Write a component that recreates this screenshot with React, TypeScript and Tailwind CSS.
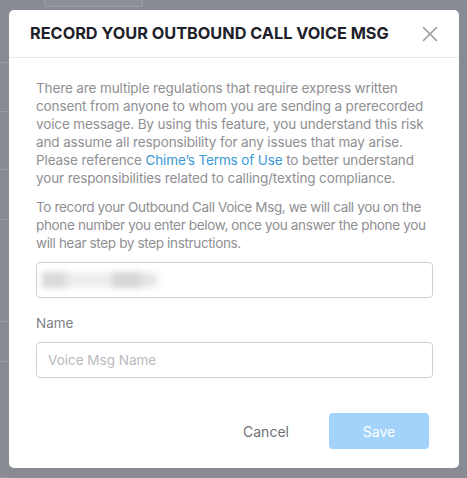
import React from "react";

export default function App() {
  const font = { fontFamily: "Inter, 'Noto Sans', sans-serif" };
  const rows = [56, 49, 58, 50, 102, 40, 116];
  return (
    <div
      className="relative w-[467px] h-[478px] overflow-hidden bg-[#898b94]"
      style={font}
    >
      {/* dimmed page behind the dialog */}
      <div className="flex flex-col">
        <div className="h-[7px] pl-[44px]">
          <div className="w-[99px] h-[7px] rounded-b-[3px] border border-t-0 border-[#9ea0a8] bg-[#8d8f98]" />
        </div>
        <div className="flex flex-col w-[9px]">
          {rows.map((h, i) => (
            <div
              key={i}
              className="border-b border-[#9a9ca4]"
              style={{ height: h }}
            />
          ))}
        </div>
      </div>

      {/* dialog overlay */}
      <div className="absolute inset-0 pt-[10px] pl-[9px]">
        <div className="w-[450px] h-[458px] bg-white rounded-[5px] flex flex-col">
          {/* header */}
          <div className="h-[48px] border-b border-[#e9e9ec] flex items-center justify-between pl-[21px] pr-[20px]">
            <h2 className="text-[16.3px] font-bold text-[#1e2129]">
              RECORD YOUR OUTBOUND CALL VOICE MSG
            </h2>
            <svg width="16" height="16" viewBox="0 0 16 16" className="mr-[1px]">
              <path
                d="M1.5 1.5 L14.5 14.5 M14.5 1.5 L1.5 14.5"
                stroke="#9b9ca2"
                strokeWidth="1.6"
                strokeLinecap="round"
              />
            </svg>
          </div>

          {/* body */}
          <div className="pt-[21px] pl-[27px] pr-[26px] text-[13.5px] leading-[18px] text-[#8f8f93]">
            <p className="pr-[-4px] mr-[-6px] tracking-[-0.12px]">
              There are multiple regulations that require express written
              consent from anyone to whom you are sending a prerecorded voice
              message. By using this feature, you understand this risk and
              assume all responsibility for any issues that may arise. Please
              reference <span className="text-[#3a98d6]">Chime’s Terms of Use</span>{" "}
              to better understand your responsibilities related to
              calling/texting compliance.
            </p>
            <p className="mt-[11px] mr-[-6px] tracking-[-0.35px]">
              To record your Outbound Call Voice Msg, we will call you on the
              phone number you enter below, once you answer the phone you will
              hear step by step instructions.
            </p>

            <div className="mt-[10px] h-[36px] rounded-[4px] border border-[#cfcfd3] flex items-center pl-[5px] overflow-hidden">
              <div className="flex items-center h-[18px] w-[116px] blur-[3px]">
                <div className="w-[24px] h-[16px] bg-[#d9d9dc]" />
                <div className="w-[46px] h-[14px] bg-[#ececee]" />
                <div className="w-[30px] h-[16px] bg-[#d6d6d9]" />
                <div className="w-[16px] h-[14px] bg-[#e6e6e8]" />
              </div>
            </div>

            <div className="mt-[16px] text-[#7e7f84]">Name</div>
            <div className="mt-[10px] h-[36px] rounded-[4px] border border-[#cfcfd3] flex items-center pl-[11px] text-[#b9bac0]">
              Voice Msg Name
            </div>
          </div>

          {/* footer */}
          <div className="mt-[35px] flex justify-end pr-[30px]">
            <button className="w-[100px] h-[36px] mr-[13px] text-[14px] text-[#6d7077]">
              Cancel
            </button>
            <button className="w-[100px] h-[36px] rounded-[4px] bg-[#a3d3fb] text-white text-[14px]">
              Save
            </button>
          </div>
        </div>
      </div>
    </div>
  );
}
